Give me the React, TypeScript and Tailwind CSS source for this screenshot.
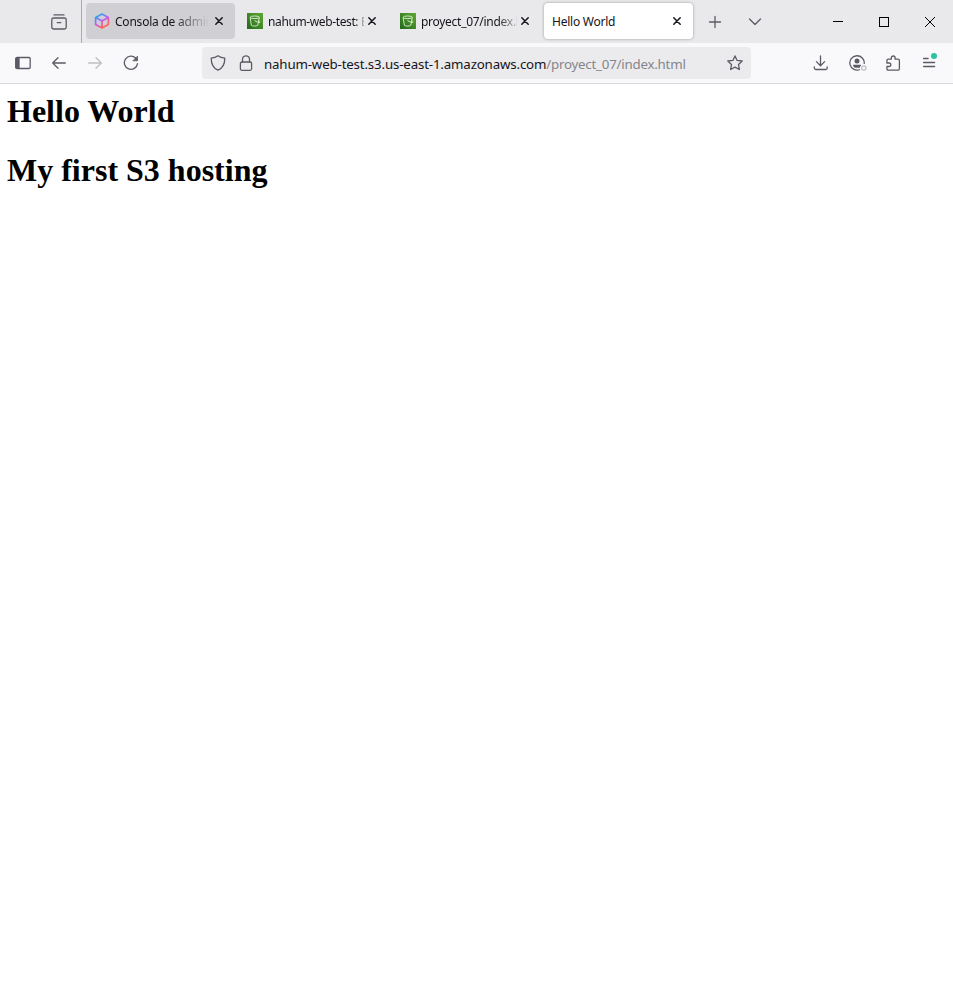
import type { ReactNode } from "react";

function Glyph({ children, className = "" }: { children: ReactNode; className?: string }) {
  return (
    <svg
      viewBox="0 0 16 16"
      className={`h-4 w-4 shrink-0 ${className}`}
      fill="none"
      stroke="currentColor"
      strokeWidth="1.3"
      strokeLinecap="round"
      strokeLinejoin="round"
    >
      {children}
    </svg>
  );
}

function AwsIcon() {
  return (
    <svg viewBox="0 0 16 16" className="h-4 w-4 shrink-0" fill="none" strokeWidth="1.7" strokeLinejoin="round">
      <defs>
        <linearGradient id="cube" x1="3" y1="1" x2="12" y2="15" gradientUnits="userSpaceOnUse">
          <stop offset="0" stopColor="#18b4dc" />
          <stop offset="0.25" stopColor="#5b8cf5" />
          <stop offset="0.5" stopColor="#c455f5" />
          <stop offset="0.75" stopColor="#ff5a70" />
          <stop offset="1" stopColor="#ff6f62" />
        </linearGradient>
      </defs>
      <path stroke="url(#cube)" d="M8 .9 14.4 4.4v7.2L8 15.1 1.6 11.6V4.4zM1.8 4.6 8 8l6.2-3.4M8 8v7" />
    </svg>
  );
}

function BucketIcon() {
  return (
    <svg viewBox="0 0 16 16" className="h-4 w-4 shrink-0" fill="none">
      <defs>
        <linearGradient id="green" x1="0" y1="16" x2="16" y2="0" gradientUnits="userSpaceOnUse">
          <stop stopColor="#21691b" />
          <stop offset="1" stopColor="#60a933" />
        </linearGradient>
      </defs>
      <path fill="url(#green)" d="M0 0h16v16H0z" />
      <g stroke="#e0f0d8" strokeWidth=".9">
        <ellipse cx="7.7" cy="4.3" rx="4.6" ry="1.3" />
        <path d="m3.1 4.5 1.3 7.8c1.2 1.1 5.1 1.1 6.4 0l1.5-7.8M7.4 7.6c2 1.1 4.2 2 5.4 1.8.6-.3 0-1-1-1.7" />
      </g>
    </svg>
  );
}

type TabProps = { title: string; icon?: ReactNode; tone?: string; fade?: string };

function Tab({ title, icon, tone = "", fade = "" }: TabProps) {
  return (
    <div className={`flex h-9 w-[149px] shrink-0 items-center rounded-[4px] pr-2 pl-2 ${tone}`}>
      {icon && <span className="mr-[5px]">{icon}</span>}
      <span className={`min-w-0 flex-1 overflow-hidden pt-[2px] text-[12px] leading-4 whitespace-nowrap ${fade}`}>{title}</span>
      <svg viewBox="0 0 16 16" className="h-4 w-4 shrink-0 text-[#15141a]" stroke="currentColor" strokeWidth="1.5" strokeLinecap="round">
        <path d="m4.800 4.800 6.400 6.400m0-6.400-6.400 6.400" />
      </svg>
    </div>
  );
}

function ToolButton({ children, className = "" }: { children: ReactNode; className?: string }) {
  return <div className={`flex h-8 w-9 items-center justify-center ${className}`}>{children}</div>;
}

function TabStrip() {
  return (
    <div className="flex h-[43px] bg-[#e9e9eb]">
      <div className="flex w-[82px] shrink-0 items-center border-r border-[#aaaab0] pl-[51px]">
        <Glyph className="text-[#5b5b66]">
          <path d="M3 .9h10" />
          <rect x=".8" y="4" width="14.4" height="11" rx="1.8" />
          <path d="M6.2 8.6h3.6" />
        </Glyph>
      </div>
      <div className="flex shrink-0 pt-[3px] pl-1">
        <Tab title="Consola de administración" icon={<AwsIcon />} tone="mr-1 bg-[#d0d0d4]" fade="tracking-[-0.22px] [mask-image:linear-gradient(to_right,black_60%,transparent_98%)]" />
        <Tab title="nahum-web-test: Bucket de S3" icon={<BucketIcon />} tone="mr-1" fade="tracking-[-0.38px] [mask-image:linear-gradient(to_right,black_90%,transparent_104%)]" />
        <Tab title="proyect_07/index.html" icon={<BucketIcon />} tone="mr-[3px]" fade="tracking-[-0.28px] [mask-image:linear-gradient(to_right,black_80%,transparent_104%)]" />
        <Tab title="Hello World" tone="bg-white shadow-[0_0_3px_rgba(0,0,0,0.35)]" fade="tracking-[-0.24px]" />
      </div>
      <div className="flex items-center pl-[13.500px] text-[#5b5b66]">
        <Glyph>
          <path d="M8 2.5v11M2.5 8h11" />
        </Glyph>
        <Glyph className="ml-[24.500px]">
          <path d="m2.5 5 5.5 5.5L13.5 5" />
        </Glyph>
      </div>
      <div className="ml-auto flex text-black">
        <div className="flex w-[46px] items-center justify-center">
          <span className="h-px w-2.5 bg-black" />
        </div>
        <div className="flex w-[46px] items-center justify-center">
          <span className="h-2.5 w-2.5 border border-black" />
        </div>
        <div className="flex w-[46px] items-center justify-center">
          <svg viewBox="0 0 12 12" className="h-3 w-3" stroke="currentColor" strokeWidth="1">
            <path d="m1 1 10 10M11 1 1 11" />
          </svg>
        </div>
      </div>
    </div>
  );
}

function NavBar() {
  return (
    <div className="flex h-[41px] items-center border-b border-[#d9d9dc] bg-[#f9f9fb] pr-1.5 pl-[5px] text-[#5b5b66]">
      <ToolButton>
        <Glyph>
          <rect x=".8" y="2.5" width="14.4" height="11" rx="1.3" />
          <path d="M1 3.2v9.6h3V3.2z" fill="currentColor" />
        </Glyph>
      </ToolButton>
      <ToolButton>
        <Glyph>
          <path d="M14.3 8H1.7M7 2.7 1.7 8 7 13.3" />
        </Glyph>
      </ToolButton>
      <ToolButton className="text-[#bdbdc3]">
        <Glyph>
          <path d="M1.7 8h12.6M9 2.7 14.3 8 9 13.3" />
        </Glyph>
      </ToolButton>
      <ToolButton>
        <Glyph>
          <path d="M12.8 3.3A6.6 6.6 0 1 0 14.5 8.6" />
          <path d="M14.5 1.5v4.3h-4.3z" fill="currentColor" strokeWidth=".8" />
        </Glyph>
      </ToolButton>
      <div className="ml-[53px] flex h-8 w-[549px] items-center rounded-[4px] bg-[#ebebed] px-2">
        <Glyph>
          <path d="M8 .8C6.2 2.2 3.6 3 1.2 3.2c0 5.4 1.5 9.7 6.8 12 5.3-2.3 6.8-6.6 6.8-12C12.4 3 9.8 2.2 8 .8z" />
        </Glyph>
        <Glyph className="ml-3">
          <rect x="2.4" y="7" width="11.2" height="8.3" rx="1.5" />
          <path d="M4.500 7V4.300a3.500 3.500 0 0 1 7 0V7" />
        </Glyph>
        <div className="ml-[10px] flex-1 pt-[2px] text-[13.3px] leading-5 tracking-[-0.16px] whitespace-nowrap text-[#15141a]">
          nahum-web-test.s3.us-east-1.amazonaws.com
          <span className="tracking-[-0.22px] text-[#85858b]">/proyect_07/index.html</span>
        </div>
        <Glyph>
          <path d="m8 .9 2.1 4.5 5.1.6-3.7 3.5.9 5L8 12.1l-4.400 2.400.9-5L.8 6l5.100-.6z" />
        </Glyph>
      </div>
      <div className="ml-auto flex">
        <ToolButton>
          <Glyph>
            <path d="M7.500.9v9.600M3.400 6.600l4.100 4.100 4.100-4.100M1.300 11.800v1.200c0 .9.600 1.500 1.500 1.500h9.900c.9 0 1.500-.6 1.500-1.500v-1.200" />
          </Glyph>
        </ToolButton>
        <ToolButton>
          <svg viewBox="0 0 18 16" className="ml-0.5 h-4 w-[18px]" fill="none" stroke="currentColor" strokeWidth="1.3">
            <path d="M11 14.500A7.200 7.200 0 1 1 15.200 8.800" />
            <circle cx="8" cy="6" r="2.500" fill="currentColor" stroke="none" />
            <path d="M4 9.800h8v.8l-1 1.200v1H6c-1.200-.6-2-1.700-2-3z" fill="currentColor" stroke="none" />
            <circle cx="14.800" cy="13" r="2.200" stroke="#bcbcc1" strokeWidth="1.200" />
          </svg>
        </ToolButton>
        <ToolButton>
          <Glyph>
            <path d="M1.900 8V5.500c0-.8.500-1.300 1.300-1.300h3.100V2.900a1.900 1.900 0 0 1 3.800 0v1.300h3c.8 0 1.300.5 1.300 1.300v8.300c0 .8-.5 1.300-1.300 1.300H3.200c-.8 0-1.300-.5-1.300-1.300v-2.300h2.200a1.750 1.750 0 0 0 0-3.500z" />
          </Glyph>
        </ToolButton>
        <ToolButton className="relative">
          <Glyph>
            <path d="M2.600 3.500h4.500M2.600 7.500h11M2.600 11.500h11" />
          </Glyph>
          <span className="absolute top-[6px] right-[10px] h-1.5 w-1.5 rounded-full bg-[#2ac3a2]" />
        </ToolButton>
      </div>
    </div>
  );
}

export default function App() {
  return (
    <div className="h-[997px] w-full overflow-hidden bg-white font-['Noto_Sans',sans-serif] text-[#15141a]">
      <TabStrip />
      <NavBar />
      <main className="px-[7px] pt-[9px] font-['Liberation_Serif',serif] text-[32px] leading-[37px] font-bold text-black">
        <h1>Hello World</h1>
        <h1 className="mt-[22px]">My first S3 hosting</h1>
      </main>
    </div>
  );
}
